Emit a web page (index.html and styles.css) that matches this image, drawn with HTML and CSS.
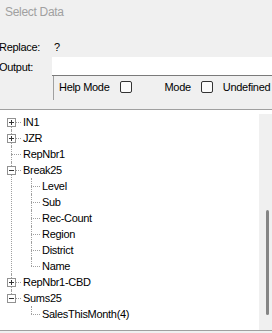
FILE: index.html
```html
<!DOCTYPE html>
<html>
<head>
<meta charset="utf-8">
<link rel="stylesheet" href="styles.css">
</head>
<body>
<div class="title">Select Data</div>
<div class="form">
  <div class="field replace">
    <span class="label">Replace:</span>
    <span class="value">?</span>
  </div>
  <div class="field output">
    <span class="label">Output:</span>
    <div class="input"></div>
  </div>
  <div class="options">
    <span class="opt-text">Help Mode</span>
    <span class="check"></span>
    <span class="opt-text mode">Mode</span>
    <span class="check"></span>
    <span class="opt-text">Undefined</span>
  </div>
</div>
<div class="panel">
  <ul class="tree">
    <li class="node">
      <div class="row"><svg class="toggle" width="9" height="9" viewBox="0 0 9 9"><rect x="0.5" y="0.5" width="8" height="8" fill="#fff" stroke="#919191"/><path d="M2 4.5H7M4.5 2V7" stroke="#333" stroke-width="1"/></svg><span>IN1</span></div>
    </li>
    <li class="node">
      <div class="row"><svg class="toggle" width="9" height="9" viewBox="0 0 9 9"><rect x="0.5" y="0.5" width="8" height="8" fill="#fff" stroke="#919191"/><path d="M2 4.5H7M4.5 2V7" stroke="#333" stroke-width="1"/></svg><span>JZR</span></div>
    </li>
    <li class="node">
      <div class="row"><span>RepNbr1</span></div>
    </li>
    <li class="node">
      <div class="row"><svg class="toggle" width="9" height="9" viewBox="0 0 9 9"><rect x="0.5" y="0.5" width="8" height="8" fill="#fff" stroke="#919191"/><path d="M2 4.5H7" stroke="#333" stroke-width="1"/></svg><span>Break25</span></div>
      <ul class="children">
        <li><div class="row"><span>Level</span></div></li>
        <li><div class="row"><span>Sub</span></div></li>
        <li><div class="row"><span>Rec-Count</span></div></li>
        <li><div class="row"><span>Region</span></div></li>
        <li><div class="row"><span>District</span></div></li>
        <li><div class="row"><span>Name</span></div></li>
      </ul>
    </li>
    <li class="node">
      <div class="row"><svg class="toggle" width="9" height="9" viewBox="0 0 9 9"><rect x="0.5" y="0.5" width="8" height="8" fill="#fff" stroke="#919191"/><path d="M2 4.5H7M4.5 2V7" stroke="#333" stroke-width="1"/></svg><span>RepNbr1-CBD</span></div>
    </li>
    <li class="node">
      <div class="row"><svg class="toggle" width="9" height="9" viewBox="0 0 9 9"><rect x="0.5" y="0.5" width="8" height="8" fill="#fff" stroke="#919191"/><path d="M2 4.5H7" stroke="#333" stroke-width="1"/></svg><span>Sums25</span></div>
      <ul class="children">
        <li><div class="row"><span>SalesThisMonth(4)</span></div></li>
      </ul>
    </li>
  </ul>
  <div class="scrollbar"><div class="thumb"></div></div>
</div>
</body>
</html>
```

FILE: styles.css
```css
html, body {
  margin: 0;
  padding: 0;
}
body {
  width: 272px;
  height: 333px;
  overflow: hidden;
  background: #f0f0f0;
  font-family: "Liberation Sans", Arial, sans-serif;
  font-size: 11px;
  letter-spacing: -0.3px;
  color: #000;
}
.title {
  height: 24px;
  line-height: 24px;
  padding-left: 5px;
  font-size: 12px;
  color: #a0a0a0;
}
.form {
  margin-top: 16px;
}
.field {
  display: flex;
  align-items: center;
}
.label {
  width: 53px;
  flex: none;
  margin-left: -1px;
}
.replace {
  height: 14px;
  line-height: 14px;
}
.value {
  padding-left: 2px;
}
.output {
  margin-top: 3px;
  height: 19px;
}
.input {
  flex: 1;
  height: 18px;
  background: #fff;
  border-bottom: 1px solid #7a7a7a;
}
.options {
  margin-left: 53px;
  height: 20px;
  padding-top: 4px;
  border-left: 1px solid #a0a0a0;
  display: flex;
  align-items: flex-start;
  line-height: 14px;
}
.opt-text {
  height: 14px;
}
.options .opt-text:first-child {
  margin-left: 5px;
}
.check {
  width: 10px;
  height: 10px;
  margin: 1px 10px 0 10px;
  border: 1px solid #333;
  border-radius: 2px;
  background: #fbfbfb;
}
.mode {
  margin-left: 23px;
}
.panel {
  margin-top: 9px;
  height: 220px;
  border-top: 1px solid #a0a0a0;
  border-bottom: 1px solid #a0a0a0;
  background: #fff;
  display: flex;
}
.tree {
  flex: 1;
  list-style: none;
  margin: 0;
  padding: 4px 0 0 0;
}
.tree ul {
  list-style: none;
  margin: 0;
  padding: 0;
}
.tree li {
  position: relative;
}
.node::before {
  content: "";
  position: absolute;
  left: 11px;
  top: 0;
  bottom: 0;
  border-left: 1px dotted #a0a0a0;
}
.node:first-child::before {
  top: 8px;
}
.node:last-child::before {
  bottom: auto;
  height: 8px;
}
.row {
  position: relative;
  height: 16px;
  line-height: 16px;
  padding-left: 23px;
  white-space: nowrap;
}
.row::before {
  content: "";
  position: absolute;
  left: 11px;
  top: 8px;
  width: 10px;
  border-top: 1px dotted #a0a0a0;
}
.toggle {
  position: absolute;
  left: 7px;
  top: 4px;
  z-index: 1;
}
.children {
  position: relative;
}
.children li::before {
  content: "";
  position: absolute;
  left: 31px;
  top: 0;
  bottom: 0;
  border-left: 1px dotted #a0a0a0;
}
.children li:last-child::before {
  bottom: auto;
  height: 8px;
}
.children .row {
  padding-left: 42px;
}
.children .row::before {
  left: 31px;
  width: 9px;
}
.scrollbar {
  width: 13px;
  margin-top: 4px;
  background: #f0f0f0;
  display: flex;
  flex-direction: column;
}
.thumb {
  margin-top: 96px;
  margin-left: 7px;
  width: 3px;
  height: 105px;
  border-radius: 2px;
  background: #858585;
}
```
